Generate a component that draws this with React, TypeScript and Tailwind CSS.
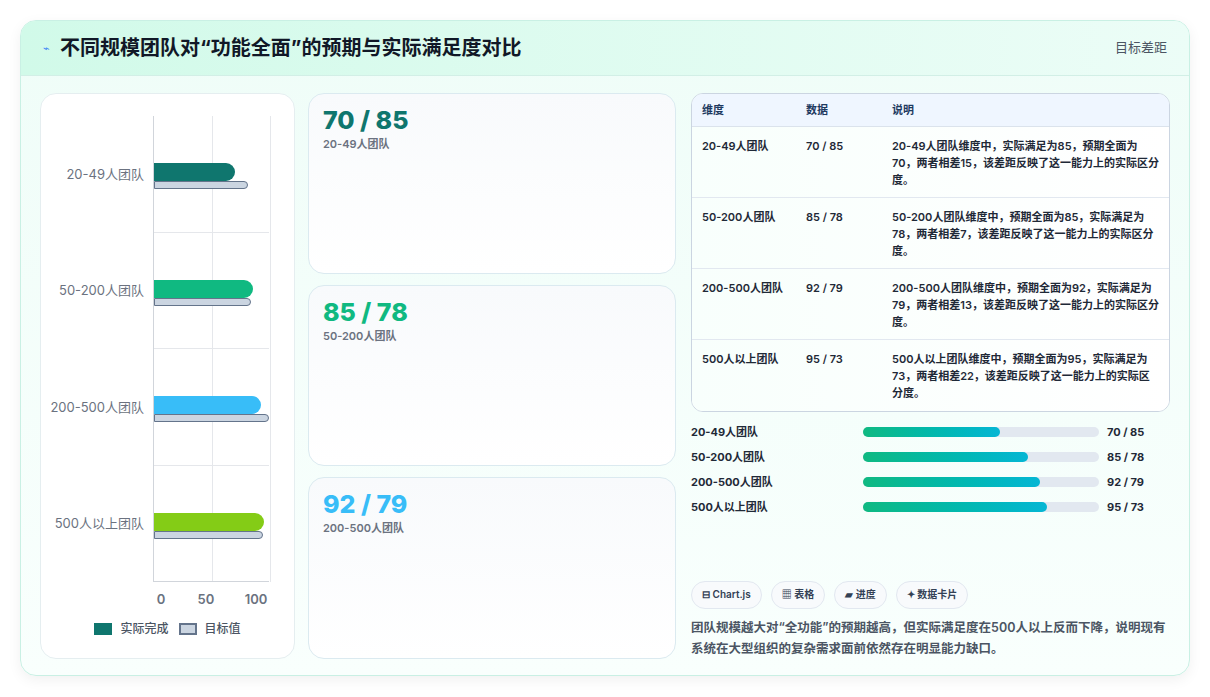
import React from 'react';

const rows = [
  { name: '20-49人团队', val: '70 / 85', a: 70, t: 81, color: '#0f766e', fill: 58, desc: '20-49人团队维度中，实际满足为85，预期全面为70，两者相差15，该差距反映了这一能力上的实际区分度。' },
  { name: '50-200人团队', val: '85 / 78', a: 85, t: 84, color: '#10b981', fill: 70, desc: '50-200人团队维度中，预期全面为85，实际满足为78，两者相差7，该差距反映了这一能力上的实际区分度。' },
  { name: '200-500人团队', val: '92 / 79', a: 92, t: 99, color: '#38bdf8', fill: 75, desc: '200-500人团队维度中，预期全面为92，实际满足为79，两者相差13，该差距反映了这一能力上的实际区分度。' },
  { name: '500人以上团队', val: '95 / 73', a: 95, t: 94, color: '#84cc16', fill: 78, desc: '500人以上团队维度中，预期全面为95，实际满足为73，两者相差22，该差距反映了这一能力上的实际区分度。' },
];

const font = { fontFamily: 'Inter, "Noto Sans CJK SC", sans-serif' };

function Chart() {
  return (
    <div className="w-[255px] shrink-0 bg-white rounded-2xl border border-[#e5eef0] flex flex-col pt-[22px] pb-[20px]">
      <div className="flex">
        <div className="w-[112px] flex flex-col">
          {rows.map((r) => (
            <div key={r.name} className="h-[116.5px] flex items-center justify-end pr-[9px] text-[13px] text-[#6b7280]">
              {r.name}
            </div>
          ))}
        </div>
        <div className="w-[116px] border-l border-[#d1d5db] relative">
          <div className="absolute top-0 bottom-0 left-[58px] border-l border-[#e5e7eb]" />
          <div className="absolute top-0 bottom-0 left-[116px] border-l border-[#e5e7eb]" />
          {rows.map((r, i) => (
            <div key={r.name} className={`h-[116.5px] flex flex-col justify-center relative ${i < 3 ? 'border-b border-[#e5e7eb]' : 'border-b border-[#d1d5db]'}`}>
              <div className="h-[18px] rounded-r-[9px] mt-[5px]" style={{ width: `${r.a * 1.16}px`, background: r.color }} />
              <div className="h-[8px] rounded-r-[4px] bg-[#cbd5e1] border-[1.5px] border-[#64748b]" style={{ width: `${r.t * 1.16}px` }} />
            </div>
          ))}
        </div>
      </div>
      <div className="flex ml-[105px] w-[130px] justify-between text-[13px] font-semibold text-[#6b7280] mt-[8px]">
        <span className="w-[30px] text-center">0</span>
        <span className="w-[30px] text-center">50</span>
        <span className="w-[40px] text-center">100</span>
      </div>
      <div className="flex justify-center items-center gap-[8px] text-[12px] text-[#4b5563] mt-[10px] font-medium">
        <span className="w-[18px] h-[12px] bg-[#0f766e]" />实际完成
        <span className="w-[18px] h-[12px] bg-[#cbd5e1] border-2 border-[#64748b] ml-[2px]" />目标值
      </div>
    </div>
  );
}

export default function App() {
  return (
    <div className="w-[1210px] h-[697px] bg-white pt-[20px] px-[20px]" style={font}>
      <div className="h-[656px] rounded-2xl border border-[#c9f0e4] bg-gradient-to-b from-[#effdf8] to-[#f9fffd] shadow-[0_4px_14px_rgba(0,0,0,0.06)] overflow-hidden flex flex-col">
        <div className="h-[55px] shrink-0 bg-gradient-to-r from-[#d1fae9] to-[#ecfdf7] border-b border-[#d2efe6] flex items-center px-[22px]">
          <span className="text-[#3b82f6] text-[11px] mr-[10px]">⌁</span>
          <h1 className="text-[20px] font-bold text-[#111827]">不同规模团队对“功能全面”的预期与实际满足度对比</h1>
          <span className="ml-auto text-[13px] text-[#4b5563]">目标差距</span>
        </div>
        <div className="flex gap-[13px] px-[19px] pt-[17px] pb-[18px] flex-1">
          <Chart />
          <div className="w-[368px] shrink-0 flex flex-col gap-[11px]">
            {rows.slice(0, 3).map((r) => (
              <div key={r.name} className="flex-1 rounded-2xl border border-[#dbeaf0] bg-gradient-to-b from-[#f8fafc] to-[#ffffff] px-[14px] pt-[10px]">
                <div className="text-[25px] font-extrabold leading-[32px]" style={{ color: r.color }}>{r.val}</div>
                <div className="text-[11px] font-semibold text-[#6b7280]">{r.name}</div>
              </div>
            ))}
          </div>
          <div className="flex-1 flex flex-col ml-[2px]">
            <div className="rounded-xl border border-[#cbd5e1] bg-white overflow-hidden text-[11px] text-[#1f2937]">
              <div className="flex h-[33px] items-center bg-[#eff6ff] border-b border-[#dbe3ec] font-semibold text-[#1e3a5f]">
                <span className="w-[114px] pl-[10px]">维度</span>
                <span className="w-[86px]">数据</span>
                <span>说明</span>
              </div>
              {rows.map((r, i) => (
                <div key={r.name} className={`flex h-[71px] pt-[11px] bg-gradient-to-r from-[#f8fffc] to-white ${i < 3 ? 'border-b border-[#e2e8f0]' : ''}`}>
                  <span className="w-[114px] pl-[10px] font-semibold">{r.name}</span>
                  <span className="w-[86px] font-semibold">{r.val}</span>
                  <span className="flex-1 pr-[10px] font-semibold leading-[17px]">{r.desc}</span>
                </div>
              ))}
            </div>
            <div className="flex flex-col gap-[9px] mt-[12px]">
              {rows.map((r) => (
                <div key={r.name} className="flex items-center h-[16px] text-[11px] font-bold text-[#1f2937]">
                  <span className="w-[172px]">{r.name}</span>
                  <div className="w-[236px] h-[10px] rounded-full bg-[#e2e8f0]">
                    <div className="h-full rounded-full bg-gradient-to-r from-[#10b981] to-[#06b6d4]" style={{ width: `${r.fill}%` }} />
                  </div>
                  <span className="ml-[8px]">{r.val}</span>
                </div>
              ))}
            </div>
            <div className="mt-auto flex gap-[9px] text-[10px] font-semibold text-[#334155]">
              <span className="px-[10px] h-[28px] flex items-center rounded-full border border-[#e2e8f0] bg-[#f8fafc]">⊟ Chart.js</span>
              <span className="px-[10px] h-[28px] flex items-center rounded-full border border-[#e2e8f0] bg-[#f8fafc]">▦ 表格</span>
              <span className="px-[10px] h-[28px] flex items-center rounded-full border border-[#e2e8f0] bg-[#f8fafc]">▰ 进度</span>
              <span className="px-[10px] h-[28px] flex items-center rounded-full border border-[#e2e8f0] bg-[#f8fafc]">✦ 数据卡片</span>
            </div>
            <p className="mt-[8px] text-[12.5px] font-semibold leading-[21px] text-[#4b5563]">
              团队规模越大对“全功能”的预期越高，但实际满足度在500人以上反而下降，说明现有系统在大型组织的复杂需求面前依然存在明显能力缺口。
            </p>
          </div>
        </div>
      </div>
    </div>
  );
}
